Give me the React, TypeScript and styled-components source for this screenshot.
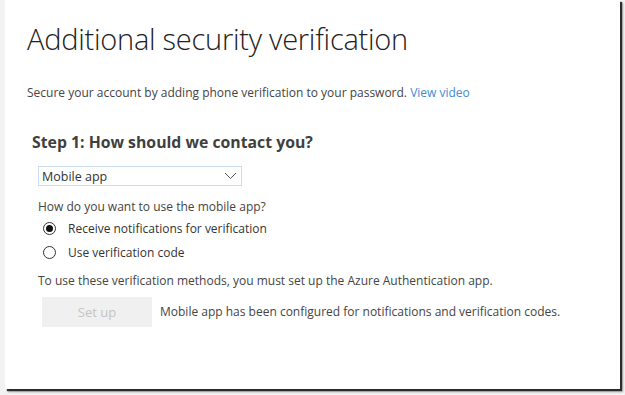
import styled, { createGlobalStyle } from "styled-components";

const Global = createGlobalStyle`
  html, body {
    margin: 0;
    padding: 0;
    background: #f2f2f2;
  }
  body {
    width: 625px;
    height: 395px;
    overflow: hidden;
    font-family: "Segoe UI", "Open Sans", "Noto Sans", sans-serif;
  }
`;

const Frame = styled.div`
  margin-left: 5px;
  width: 615px;
  height: 389px;
  background: #fff;
  box-shadow: 2px 2px 1px rgba(0, 0, 0, 0.75), 3px 3px 2px rgba(0, 0, 0, 0.3);
  box-sizing: border-box;
  padding: 19px 0 0 22px;
`;

const Title = styled.h1`
  margin: 0;
  font-weight: 300;
  font-size: 29px;
  color: #222;
  letter-spacing: -0.25px;
  line-height: 40px;
`;

const Lead = styled.p`
  margin: 25px 0 0;
  font-size: 12px;
  color: #444;
  line-height: 18px;
`;

const Link = styled.a`
  color: #3b8ed6;
  text-decoration: none;
`;

const Step = styled.section`
  margin: 29px 0 0 5px;
  display: flex;
  flex-direction: column;
`;

const StepTitle = styled.h2`
  margin: 0;
  font-size: 15.8px;
  font-weight: 700;
  color: #3f3f3f;
  line-height: 22px;
`;

const Body = styled.div`
  padding-left: 6px;
  display: flex;
  flex-direction: column;
`;

const Select = styled.div`
  margin-top: 13px;
  width: 204px;
  height: 20px;
  box-sizing: border-box;
  border: 1px solid #c9dcf0;
  display: flex;
  align-items: center;
  justify-content: space-between;
  padding: 0 4px 0 3px;
  font-size: 12.5px;
  color: #333;
`;

const Text = styled.div<{ $top?: number }>`
  margin-top: ${(p) => p.$top ?? 0}px;
  font-size: 12px;
  color: #444;
  line-height: 18px;
`;

const Option = styled.label`
  display: flex;
  align-items: center;
  gap: 12px;
  margin-left: 5px;
  height: 24px;
  font-size: 12px;
  color: #333;
`;

const Radio = styled.span<{ $on?: boolean }>`
  width: 13px;
  height: 13px;
  border-radius: 50%;
  border: 1px solid #333;
  box-sizing: border-box;
  display: flex;
  align-items: center;
  justify-content: center;
  &::after {
    content: "";
    width: 7px;
    height: 7px;
    border-radius: 50%;
    background: ${(p) => (p.$on ? "#111" : "transparent")};
  }
`;

const ActionRow = styled.div`
  margin-top: 7px;
  margin-left: 4px;
  display: flex;
  align-items: center;
  gap: 8px;
`;

const Button = styled.button`
  width: 110px;
  height: 30px;
  border: 0;
  background: #f0f0f0;
  color: #c4c4c4;
  font-family: inherit;
  font-size: 13px;
`;

function App() {
  return (
    <>
      <Global />
      <Frame>
        <Title>Additional security verification</Title>
        <Lead>
          Secure your account by adding phone verification to your password.{" "}
          <Link href="#">View video</Link>
        </Lead>
        <Step>
          <StepTitle>Step 1: How should we contact you?</StepTitle>
          <Body>
            <Select>
              <span>Mobile app</span>
              <svg width="13" height="8" viewBox="0 0 13 8">
                <path d="M1 1l5.5 5.5L12 1" fill="none" stroke="#555" strokeWidth="1" />
              </svg>
            </Select>
            <Text $top={12}>How do you want to use the mobile app?</Text>
            <Option>
              <Radio $on />
              Receive notifications for verification
            </Option>
            <Option>
              <Radio />
              Use verification code
            </Option>
            <Text $top={8}>
              To use these verification methods, you must set up the Azure Authentication app.
            </Text>
            <ActionRow>
              <Button disabled>Set up</Button>
              <Text>Mobile app has been configured for notifications and verification codes.</Text>
            </ActionRow>
          </Body>
        </Step>
      </Frame>
    </>
  );
}

export default App;
